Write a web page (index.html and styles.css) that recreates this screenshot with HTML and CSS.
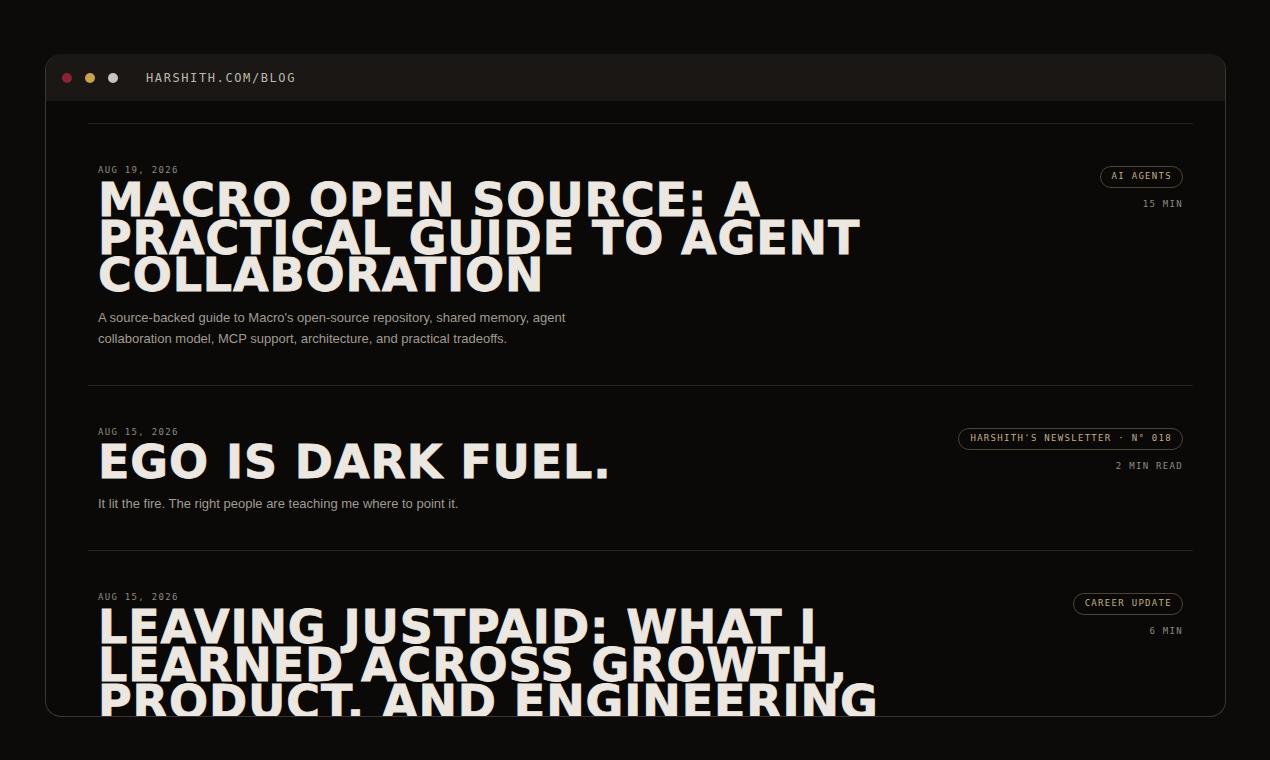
FILE: index.html
```html
<!DOCTYPE html>
<html>
<head>
<meta charset="utf-8">
<link rel="stylesheet" href="styles.css">
</head>
<body>
<div class="window">
  <div class="titlebar">
    <span class="dot dot-red"></span>
    <span class="dot dot-yellow"></span>
    <span class="dot dot-grey"></span>
    <span class="url">HARSHITH.COM/BLOG</span>
  </div>
  <div class="content">
    <div class="list">
      <article class="post">
        <div class="main">
          <div class="date">AUG 19, 2026</div>
          <h2 class="title">MACRO OPEN SOURCE: A PRACTICAL GUIDE TO AGENT COLLABORATION</h2>
          <p class="desc">A source-backed guide to Macro's open-source repository, shared memory, agent collaboration model, MCP support, architecture, and practical tradeoffs.</p>
        </div>
        <div class="meta">
          <span class="tag">AI AGENTS</span>
          <span class="time">15 MIN</span>
        </div>
      </article>
      <article class="post">
        <div class="main">
          <div class="date">AUG 15, 2026</div>
          <h2 class="title">EGO IS DARK FUEL.</h2>
          <p class="desc">It lit the fire. The right people are teaching me where to point it.</p>
        </div>
        <div class="meta">
          <span class="tag">HARSHITH'S NEWSLETTER · N° 018</span>
          <span class="time">2 MIN READ</span>
        </div>
      </article>
      <article class="post">
        <div class="main">
          <div class="date">AUG 15, 2026</div>
          <h2 class="title">LEAVING JUSTPAID: WHAT I LEARNED ACROSS GROWTH, PRODUCT, AND ENGINEERING</h2>
          <p class="desc">What three years taught me.</p>
        </div>
        <div class="meta">
          <span class="tag">CAREER UPDATE</span>
          <span class="time">6 MIN</span>
        </div>
      </article>
    </div>
  </div>
</div>
</body>
</html>
```

FILE: styles.css
```css
html, body {
  margin: 0;
  padding: 0;
  background: #0c0b0a;
  height: 100%;
}
body {
  padding: 54px 44px 0 45px;
  box-sizing: border-box;
  font-family: "Liberation Sans", Arial, sans-serif;
}
.window {
  height: 662px;
  border-radius: 16px;
  overflow: hidden;
  background: #0a0908;
  border: 1px solid #3a3631;
  border-top: none;
  display: flex;
  flex-direction: column;
}
.titlebar {
  height: 47px;
  flex: none;
  background: #1a1715;
  display: flex;
  align-items: center;
  padding-left: 17px;
  margin: 0 -1px;
}
.dot {
  width: 10px;
  height: 10px;
  border-radius: 50%;
  margin-right: 13px;
}
.dot-red { background: #8c2233; }
.dot-yellow { background: #c9a24e; }
.dot-grey { background: #c9c5bd; }
.url {
  margin-left: 15px;
  font-family: "DejaVu Sans Mono", monospace;
  font-size: 12px;
  letter-spacing: 1.6px;
  color: #bdb8ae;
}
.content {
  flex: 1;
  overflow: hidden;
  padding: 22px 32px 0 42px;
}
.post {
  border-top: 1px solid #25221f;
  display: flex;
  justify-content: space-between;
  padding: 40px 10px 36px 10px;
}
.main {
  flex: 1;
}
.date {
  font-family: "DejaVu Sans Mono", monospace;
  font-size: 9px;
  line-height: 12px;
  letter-spacing: 1.3px;
  color: #8e8982;
}
.title {
  margin: 6px 0 0 0;
  font-family: "DejaVu Sans", sans-serif;
  font-weight: bold;
  font-size: 46px;
  line-height: 37.5px;
  color: #ece8e1;
  -webkit-text-stroke: 0.8px #ece8e1;
  max-width: 820px;
  letter-spacing: 0.9px;
}
.desc {
  margin: 12px 0 0 0;
  font-size: 13px;
  line-height: 21px;
  color: #a19b91;
  max-width: 480px;
}
.meta {
  display: flex;
  flex-direction: column;
  align-items: flex-end;
  padding-top: 2px;
}
.tag {
  font-family: "DejaVu Sans Mono", monospace;
  font-size: 9px;
  letter-spacing: 1.3px;
  line-height: 11px;
  color: #c2ad85;
  border: 1px solid #4b4336;
  border-radius: 11px;
  padding: 4px 10px 5px 11px;
}
.time {
  margin-top: 10px;
  font-family: "DejaVu Sans Mono", monospace;
  font-size: 9px;
  letter-spacing: 1.3px;
  line-height: 12px;
  color: #8e8982;
}
```
